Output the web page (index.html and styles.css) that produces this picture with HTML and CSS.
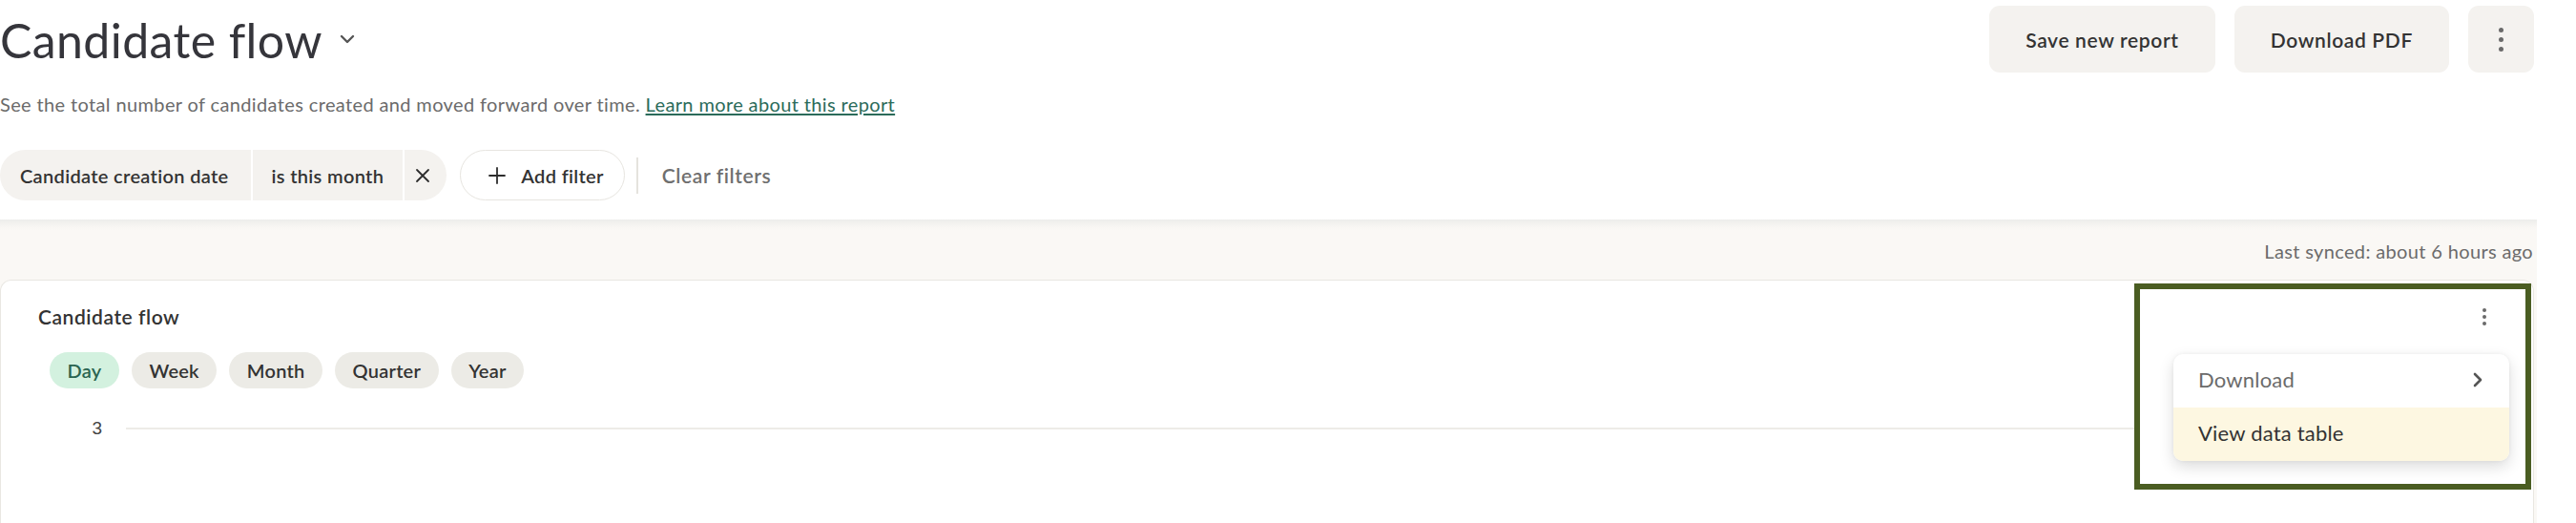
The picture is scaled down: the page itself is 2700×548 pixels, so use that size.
FILE: index.html
```html
<!DOCTYPE html>
<html lang="en">
<head>
<meta charset="utf-8">
<title>Candidate flow</title>
<link rel="stylesheet" href="styles.css">
</head>
<body>
<div class="page">
  <header class="top">
    <div class="title-wrap">
      <h1 class="title">Candidate flow</h1>
      <svg class="title-chev" width="16" height="10" viewBox="0 0 16 10"><path d="M2 2 L8 8 L14 2" fill="none" stroke="#555" stroke-width="2.4" stroke-linecap="round" stroke-linejoin="round"/></svg>
    </div>
    <div class="actions">
      <button class="btn">Save new report</button>
      <button class="btn">Download PDF</button>
      <button class="btn btn-icon" aria-label="More">
        <span class="dots"><i></i><i></i><i></i></span>
      </button>
    </div>
  </header>

  <p class="subtitle">See the total number of candidates created and moved forward over time. <a href="#" class="link">Learn more about this report</a></p>

  <div class="filters">
    <div class="chip">
      <span class="seg seg-first">Candidate creation date</span>
      <span class="seg">is this month</span>
      <span class="seg seg-last">
        <svg width="16" height="16" viewBox="0 0 16 16"><path d="M2 2 L14 14 M14 2 L2 14" stroke="#2d2d2d" stroke-width="1.8" stroke-linecap="round"/></svg>
      </span>
    </div>
    <button class="add-filter">
      <svg width="18" height="18" viewBox="0 0 18 18"><path d="M9 1 V17 M1 9 H17" stroke="#2d2d2d" stroke-width="1.8" stroke-linecap="round"/></svg>
      <span>Add filter</span>
    </button>
    <span class="vdiv"></span>
    <button class="clear">Clear filters</button>
  </div>

  <section class="content">
    <div class="synced">Last synced: about 6 hours ago</div>
    <div class="card">
      <div class="card-head">
        <h2 class="card-title">Candidate flow</h2>
        <button class="card-kebab" aria-label="Chart options">
          <span class="dots small"><i></i><i></i><i></i></span>
        </button>
      </div>
      <div class="pills">
        <span class="pill active">Day</span>
        <span class="pill">Week</span>
        <span class="pill">Month</span>
        <span class="pill">Quarter</span>
        <span class="pill">Year</span>
      </div>
      <div class="chart-row">
        <span class="axis-label">3</span>
        <span class="gridline"></span>
      </div>

      <div class="highlight"></div>
      <div class="menu">
        <div class="menu-item muted">
          <span>Download</span>
          <svg width="12" height="18" viewBox="0 0 12 18"><path d="M3 3 L9 9 L3 15" fill="none" stroke="#555" stroke-width="2.6" stroke-linecap="round" stroke-linejoin="round"/></svg>
        </div>
        <div class="menu-item hover">View data table</div>
      </div>
    </div>
  </section>
</div>
</body>
</html>
```

FILE: styles.css
```css
* { box-sizing: border-box; }

html, body {
  margin: 0;
  padding: 0;
  background: #ffffff;
  overflow: hidden;
}

body {
  font-family: "Lato", "Liberation Sans", sans-serif;
  color: #333333;
  letter-spacing: 0.35px;
}

button {
  font-family: inherit;
  letter-spacing: inherit;
  border: 0;
  cursor: pointer;
}

.page {
  width: 2659px;
}

/* Header */
.top {
  display: flex;
  justify-content: space-between;
  align-items: flex-start;
  height: 76px;
}

.title-wrap {
  display: flex;
  align-items: flex-start;
  gap: 18px;
  padding-top: 12px;
}

.title {
  margin: 0;
  font-size: 50px;
  font-weight: 400;
  line-height: 60px;
  color: #35353b;
  letter-spacing: 0.4px;
}

.title-chev {
  margin-top: 24px;
}

.actions {
  display: flex;
  gap: 20px;
  padding-top: 6px;
  padding-right: 3px;
}

.btn {
  height: 70px;
  padding: 0 38px;
  border-radius: 11px;
  background: #f4f2ef;
  font-size: 21px;
  font-weight: 600;
  letter-spacing: 0.65px;
  color: #333333;
}

.btn-icon {
  width: 69px;
  padding: 0;
  display: flex;
  align-items: center;
  justify-content: center;
}

.dots {
  display: flex;
  flex-direction: column;
  gap: 5px;
}

.dots i {
  display: block;
  width: 5px;
  height: 5px;
  border-radius: 50%;
  background: #6a6a6a;
}

.dots.small {
  gap: 2.5px;
}

.dots.small i {
  width: 4.5px;
  height: 4.5px;
}

/* Subtitle */
.subtitle {
  margin: 21px 0 0;
  font-size: 20px;
  line-height: 24px;
  letter-spacing: 0.37px;
  color: #6b6b6b;
}

.link {
  color: #2b6b5a;
  text-decoration: underline;
  text-underline-offset: 2px;
  text-decoration-thickness: 1.5px;
}

/* Filters */
.filters {
  display: flex;
  align-items: center;
  margin-top: 36px;
  height: 53px;
}

.chip {
  display: flex;
  height: 53px;
  gap: 2px;
}

.seg {
  display: flex;
  align-items: center;
  background: #f4f2ef;
  font-size: 20px;
  font-weight: 600;
  letter-spacing: 0.33px;
  color: #333333;
  padding: 0 20px;
}

.seg-first {
  padding: 0 23px 0 21px;
  border-radius: 27px 0 0 27px;
}

.seg-last {
  padding: 0 17px 0 11px;
  border-radius: 0 27px 27px 0;
}

.add-filter {
  display: flex;
  align-items: center;
  gap: 16px;
  height: 53px;
  margin-left: 14px;
  padding: 0 21px 0 29px;
  background: #ffffff;
  border: 1.5px solid #e7e5e0;
  border-radius: 27px;
  font-size: 20px;
  font-weight: 600;
  letter-spacing: 0.33px;
  color: #333333;
}

.vdiv {
  width: 2px;
  height: 38px;
  background: #e5e3de;
  margin-left: 12px;
}

.clear {
  margin-left: 25px;
  padding: 0;
  background: transparent;
  font-size: 21px;
  font-weight: 600;
  letter-spacing: 0.6px;
  color: #6f6f6f;
}

/* Content */
.content {
  margin-top: 20px;
  background: linear-gradient(#ededeb 0px, #f8f6f3 8px, #faf8f5 12px);
  height: 318px;
}

.synced {
  height: 63px;
  display: flex;
  align-items: center;
  justify-content: flex-end;
  padding-right: 4px;
  padding-top: 2px;
  font-size: 20px;
  letter-spacing: 0.35px;
  color: #6b6b6b;
}

.card {
  position: relative;
  width: 2656px;
  height: 255px;
  background: #ffffff;
  border: 1px solid #e9e7e2;
  border-bottom: 0;
  border-radius: 12px 12px 0 0;
  padding: 25px 39px 0 39px;
}

.card-head {
  display: flex;
  justify-content: space-between;
  align-items: center;
  height: 26px;
}

.card-title {
  margin: 0;
  font-size: 21px;
  font-weight: 600;
  line-height: 26px;
  letter-spacing: 0.55px;
  color: #333333;
}

.card-kebab {
  position: relative;
  z-index: 2;
  width: 24px;
  height: 26px;
  padding: 0;
  background: transparent;
  display: flex;
  align-items: center;
  justify-content: center;
}

.pills {
  display: flex;
  gap: 13px;
  margin-top: 24px;
  margin-left: 12px;
}

.pill {
  height: 38px;
  padding: 0 18.5px;
  display: flex;
  align-items: center;
  border-radius: 19px;
  background: #ecebe6;
  font-size: 20px;
  font-weight: 600;
  letter-spacing: 0.25px;
  color: #333333;
}

.pill.active {
  background: #d3f1df;
  color: #2a6450;
}

.chart-row {
  display: flex;
  align-items: center;
  height: 20px;
  margin-top: 32px;
}

.axis-label {
  width: 67px;
  text-align: right;
  font-family: "Liberation Sans", "Lato", sans-serif;
  font-size: 19px;
  letter-spacing: 0;
  color: #444444;
}

.gridline {
  flex: 1;
  height: 2px;
  margin-left: 25px;
  background: #edece7;
}

/* Annotation box + menu overlays */
.highlight {
  position: absolute;
  z-index: 1;
  left: 2236px;
  top: 3px;
  width: 416px;
  height: 216px;
  border: 6px solid #4a5d22;
  background: #ffffff;
}

.menu {
  position: absolute;
  z-index: 3;
  left: 2277px;
  top: 77px;
  width: 352px;
  border-radius: 10px;
  background: #ffffff;
  box-shadow: 0 6px 16px rgba(0, 0, 0, 0.14), 0 0 4px rgba(0, 0, 0, 0.05);
  overflow: hidden;
}

.menu-item {
  height: 56px;
  display: flex;
  align-items: center;
  justify-content: space-between;
  padding: 0 27px 3px 26px;
  font-size: 22px;
  letter-spacing: 0.2px;
  color: #333333;
}

.menu-item.muted {
  color: #6b6b6b;
}

.menu-item.hover {
  background: #fdf7e1;
}
```
